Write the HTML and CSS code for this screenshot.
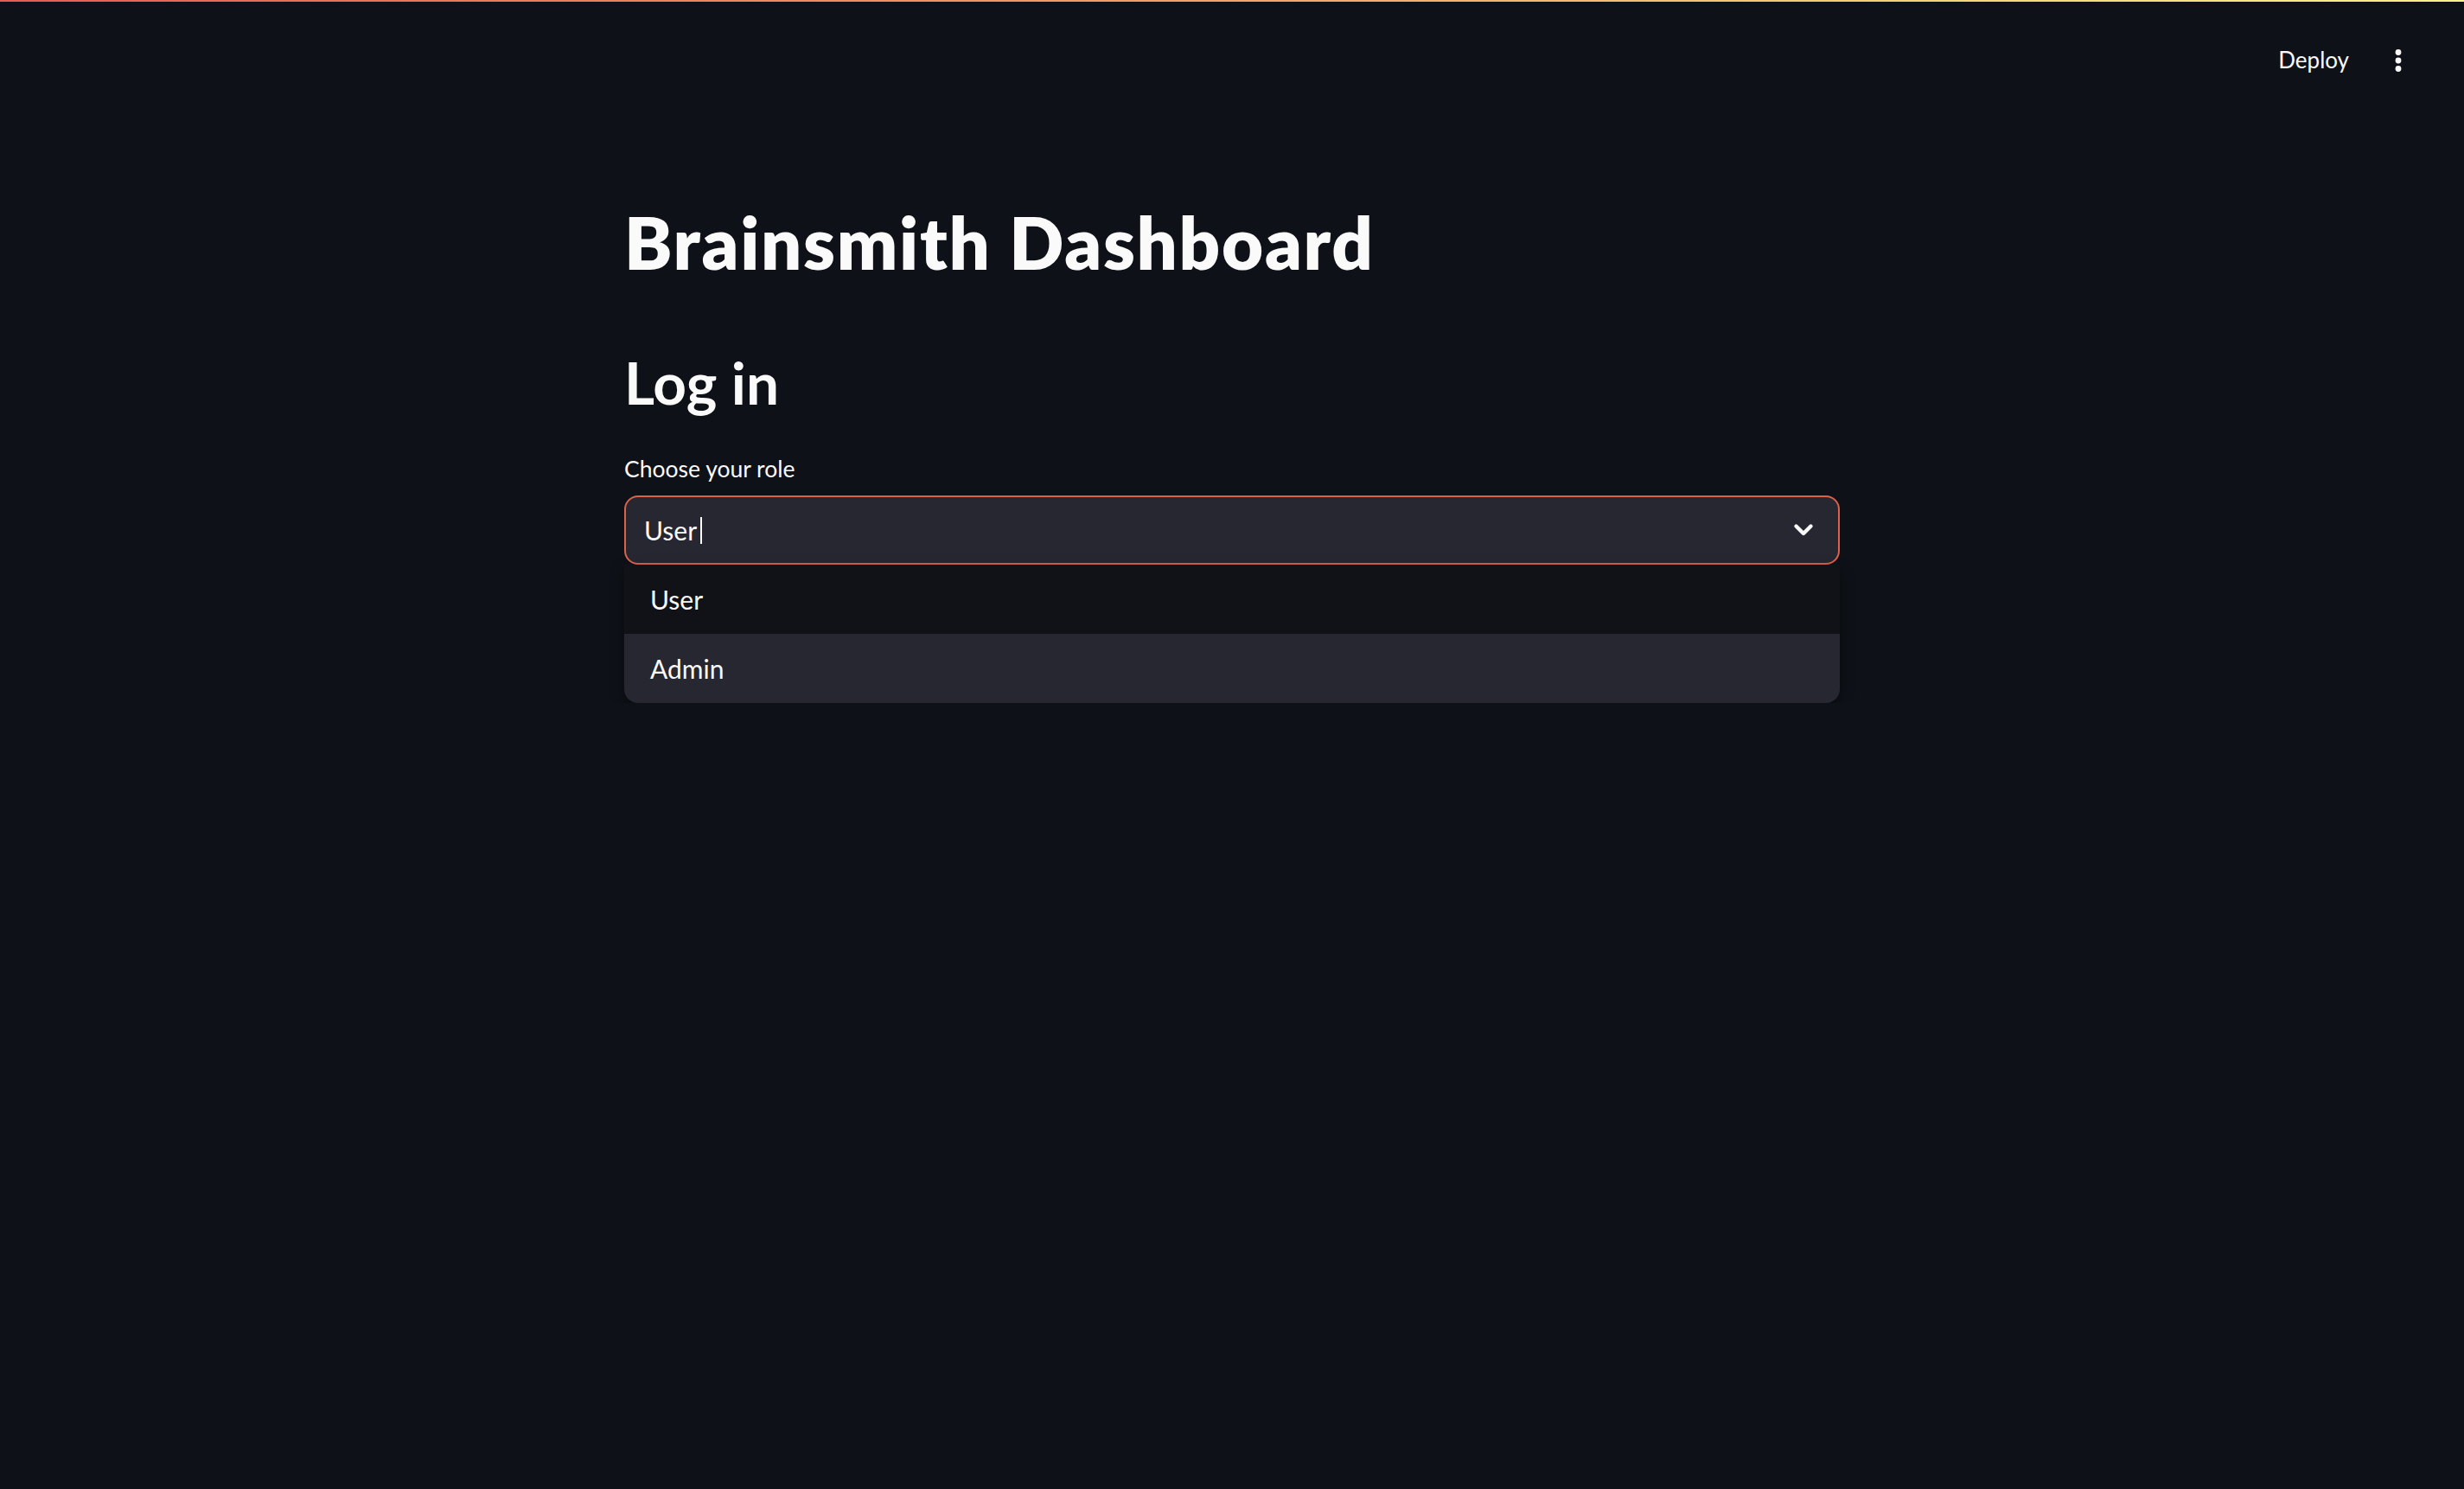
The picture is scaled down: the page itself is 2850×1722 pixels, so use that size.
FILE: index.html
```html
<!DOCTYPE html>
<html lang="en">
<head>
<meta charset="utf-8">
<title>Brainsmith Dashboard</title>
<link rel="stylesheet" href="styles.css">
</head>
<body>
<div class="decoration"></div>
<header class="toolbar">
  <button class="deploy">Deploy</button>
  <button class="kebab" aria-label="Main menu">
    <svg width="40" height="40" viewBox="0 0 40 40"><circle cx="20" cy="10.5" r="3.4" fill="#fafafa"/><circle cx="20" cy="20" r="3.4" fill="#fafafa"/><circle cx="20" cy="29.5" r="3.4" fill="#fafafa"/></svg>
  </button>
</header>
<main class="main">
  <h1 class="title">Brainsmith Dashboard</h1>
  <h2 class="subtitle">Log in</h2>
  <label class="label">Choose your role</label>
  <div class="select-wrap">
    <div class="select">
      <span class="value">User</span><span class="caret"></span>
      <span class="spacer"></span>
      <svg class="chevron" width="40" height="40" viewBox="0 0 40 40"><path d="M11.5 15.5 L20 24 L28.5 15.5" fill="none" stroke="#fafafa" stroke-width="4.4" stroke-linecap="round" stroke-linejoin="round"/></svg>
    </div>
    <ul class="menu">
      <li class="option">User</li>
      <li class="option active">Admin</li>
    </ul>
  </div>
</main>
</body>
</html>
```
FILE: styles.css
```css
html, body {
  margin: 0;
  padding: 0;
  background: #0e1117;
  color: #fafafa;
  font-family: Lato, "Noto Sans", sans-serif;
}
.decoration {
  height: 2px;
  background: linear-gradient(90deg, #e45f50 0%, #f1a36a 50%, #fdf38a 100%);
}
.toolbar {
  display: flex;
  justify-content: flex-end;
  align-items: center;
  gap: 21px;
  padding: 52px 56px 0 0;
}
.deploy {
  background: none;
  border: none;
  color: #fafafa;
  font-family: inherit;
  font-size: 26px;
  line-height: 1.2;
  padding: 0 16px;
  margin: 0;
}
.kebab {
  background: none;
  border: none;
  padding: 0;
  width: 40px;
  height: 32px;
  display: flex;
  align-items: center;
  justify-content: center;
}
.main {
  max-width: 1406px;
  margin: 0 auto;
  padding-top: 145px;
}
.title {
  margin: 0;
  font-size: 83px;
  line-height: 1.2;
  font-weight: 800;
  letter-spacing: 1.7px;
}
.subtitle {
  margin: 70px 0 0;
  font-size: 67.5px;
  line-height: 1.2;
  font-weight: 700;
}
.label {
  display: block;
  margin-top: 45px;
  font-size: 26.5px;
  line-height: 1.2;
}
.select-wrap {
  margin-top: 15px;
}
.select {
  box-sizing: border-box;
  height: 80px;
  display: flex;
  align-items: center;
  background: #262730;
  border: 2px solid #de614c;
  border-radius: 16px;
  padding: 0 20px 0 21px;
}
.value {
  font-size: 30px;
  line-height: 1.2;
}
.caret {
  display: inline-block;
  width: 2px;
  height: 31px;
  background: #fafafa;
  margin-left: 4px;
}
.spacer {
  flex: 1;
}
.chevron {
  display: block;
}
.menu {
  list-style: none;
  margin: 0;
  padding: 0;
  background: #111218;
  border-radius: 0 0 16px 16px;
  overflow: hidden;
  box-shadow: 0 6px 16px rgba(0, 0, 0, 0.35);
}
.option {
  height: 80px;
  display: flex;
  align-items: center;
  padding-left: 30px;
  font-size: 30px;
  line-height: 1.2;
}
.option.active {
  background: #262730;
}
```
